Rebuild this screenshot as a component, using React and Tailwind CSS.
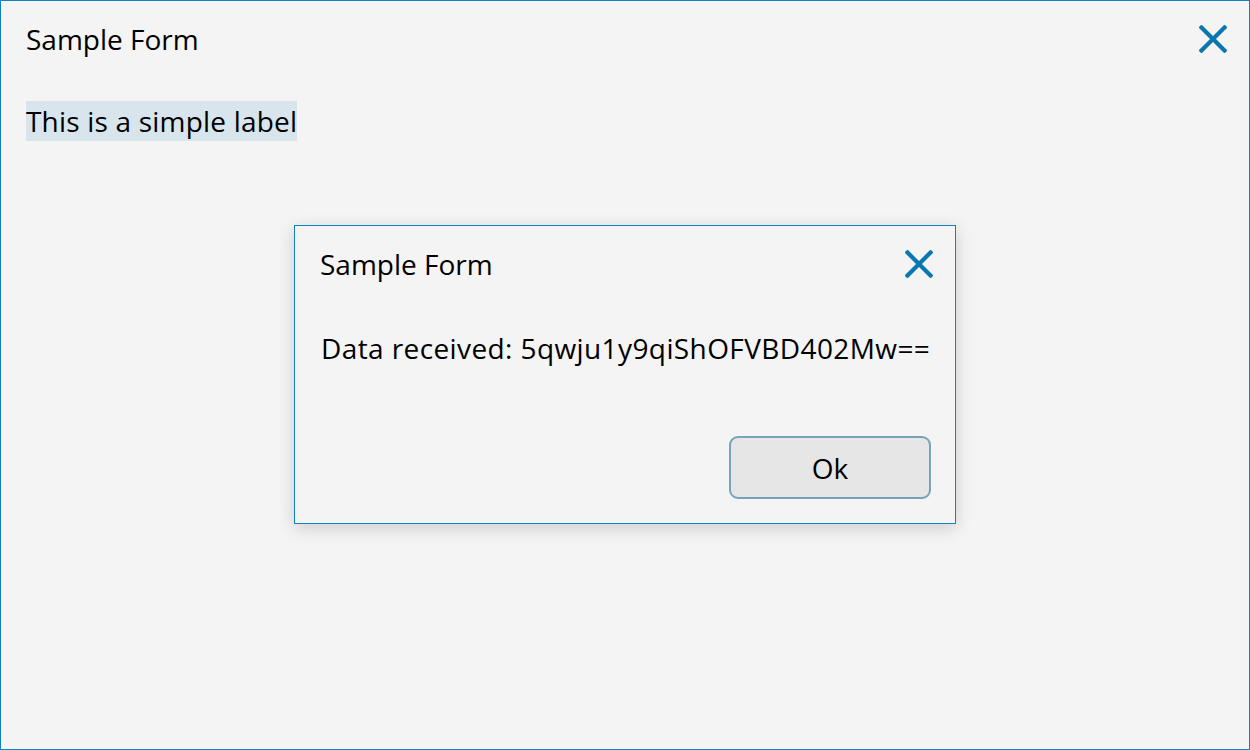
import React from "react";

function CloseIcon({ className }) {
  return (
    <svg viewBox="0 0 28 28" className={className} fill="none">
      <path d="M2.5 2.5 L25.5 25.5 M25.5 2.5 L2.5 25.5" stroke="#0a78b0" strokeWidth="4.2" strokeLinecap="square" />
    </svg>
  );
}

export default function App() {
  return (
    <div
      className="w-[1250px] h-[750px] bg-[#f4f4f4] border border-[#1282c2] relative flex flex-col text-black"
      style={{ fontFamily: '"Open Sans", "Noto Sans", sans-serif' }}
    >
      <div className="flex items-start justify-between pl-[25px] pr-[22px] pt-[24px]">
        <span className="text-[28px] leading-none">Sample Form</span>
        <CloseIcon className="w-[28px] h-[28px]" />
      </div>
      <div className="pl-[25px] mt-[48px]">
        <span className="inline-block bg-[#d8e5ec] text-[28px] leading-[40px] h-[40px] tracking-[0.2px]">This is a simple label</span>
      </div>

      <div className="absolute left-[293px] top-[224px] w-[662px] h-[299px] bg-[#f4f4f4] border border-[#1282c2] shadow-[0_4px_16px_rgba(0,0,0,0.16)] flex flex-col">
        <div className="flex items-start justify-between pl-[25px] pr-[22px] pt-[24px]">
          <span className="text-[28px] leading-none">Sample Form</span>
          <CloseIcon className="w-[28px] h-[28px]" />
        </div>
        <div className="pl-[26px] mt-[56px] text-[28px] leading-none whitespace-nowrap tracking-[0.4px]">Data received: 5qwju1y9qiShOFVBD402Mw==</div>
        <div className="flex justify-end pr-[24px] mt-auto mb-[24px]">
          <button className="w-[202px] h-[63px] rounded-[9px] border-2 border-[#76a3b6] bg-[#e6e6e6] text-[28px] leading-none">Ok</button>
        </div>
      </div>
    </div>
  );
}
